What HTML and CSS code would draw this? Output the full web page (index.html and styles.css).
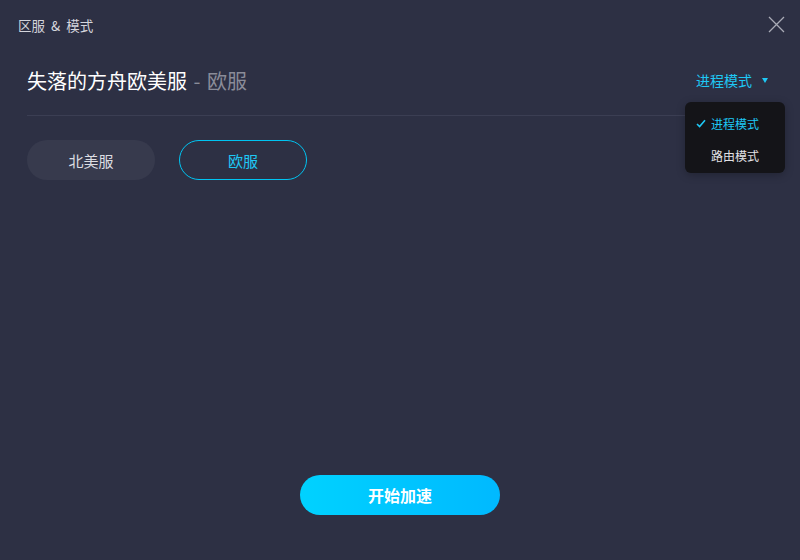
FILE: index.html
```html
<html>

<head>
  <link rel="stylesheet" href="styles.css">
</head>

<body>
  <div class="app">
    <div class="topbar">
      <span class="topbar-title">区服 &amp; 模式</span>
      <svg class="close" width="17" height="17" viewBox="0 0 17 17">
        <path d="M1 1 L16 16 M16 1 L1 16" stroke="#a9abb6" stroke-width="1.3" fill="none" />
      </svg>
    </div>

    <div class="main">
      <div class="head-row">
        <div class="game-title">失落的方舟欧美服<span class="sub"> - 欧服</span></div>
        <div class="mode">
          <span class="mode-label">进程模式</span>
          <span class="caret"></span>
          <div class="menu">
            <div class="menu-item active">
              <svg class="check" width="10" height="9" viewBox="0 0 10 9">
                <path d="M1 5 L3.6 7.6 L9 1.2" stroke="#1ec8f5" stroke-width="1.6" fill="none" />
              </svg>
              进程模式
            </div>
            <div class="menu-item">路由模式</div>
          </div>
        </div>
      </div>

      <div class="servers">
        <div class="server">北美服</div>
        <div class="server selected">欧服</div>
      </div>
    </div>

    <div class="footer">
      <button class="start">开始加速</button>
    </div>
  </div>
</body>

</html>
```

FILE: styles.css
```css
body {
  margin: 0;
  padding: 0;
  background-color: #2d3044;
  font-family: "Noto Sans CJK SC", "Noto Sans", sans-serif;
}

.app {
  width: 800px;
  height: 560px;
  display: flex;
  flex-direction: column;
  background-color: #2d3044;
}

.topbar {
  height: 50px;
  display: flex;
  align-items: center;
  justify-content: space-between;
  padding: 0 15px 0 18px;
}

.topbar-title {
  font-size: 13.5px;
  word-spacing: 3px;
  color: #d4d5dc;
}

.topbar-title .amp {
  font-size: 15px;
}

.close {
  margin-top: -2px;
}

.main {
  flex: 1;
  padding: 0 27px;
}

.head-row {
  display: flex;
  align-items: center;
  justify-content: space-between;
  height: 40px;
  padding: 10px 0 15px 0;
  border-bottom: 1px solid #3b3e53;
}

.game-title {
  font-size: 20px;
  color: #ffffff;
}

.game-title .sub {
  color: #8a8c99;
  word-spacing: 2px;
}

.mode {
  position: relative;
  display: flex;
  align-items: center;
  margin-right: 5px;
  color: #1ec8f5;
  font-size: 14px;
}

.caret {
  width: 0;
  height: 0;
  border-left: 3.5px solid transparent;
  border-right: 3.5px solid transparent;
  border-top: 5px solid #1ec8f5;
  margin-left: 10px;
}

.menu {
  position: absolute;
  top: 32px;
  right: -17px;
  width: 100px;
  padding: 5px 0 2px 0;
  background-color: #141418;
  border-radius: 6px;
  box-shadow: 0 2px 8px rgba(0, 0, 0, 0.25);
  z-index: 10;
}

.menu-item {
  height: 32px;
  display: flex;
  align-items: center;
  padding-left: 26px;
  font-size: 12px;
  color: #e2e2e6;
  position: relative;
}

.menu-item.active {
  color: #1ec8f5;
}

.check {
  position: absolute;
  left: 11px;
  top: 12px;
}

.servers {
  display: flex;
  gap: 24px;
  margin-top: 24px;
}

.server {
  width: 128px;
  height: 40px;
  box-sizing: border-box;
  border-radius: 20px;
  background-color: #373a4d;
  color: #dcdde2;
  font-size: 15px;
  display: flex;
  align-items: center;
  justify-content: center;
}

.server.selected {
  background-color: transparent;
  border: 1px solid #00c4f2;
  color: #1ec8f5;
}

.footer {
  display: flex;
  justify-content: center;
  padding-bottom: 45px;
}

.start {
  width: 200px;
  height: 40px;
  border: none;
  border-radius: 20px;
  background: linear-gradient(90deg, #00d2ff, #00b9ff);
  color: #ffffff;
  font-family: "Noto Sans CJK SC", sans-serif;
  font-size: 16px;
  font-weight: bold;
  cursor: pointer;
}
```
